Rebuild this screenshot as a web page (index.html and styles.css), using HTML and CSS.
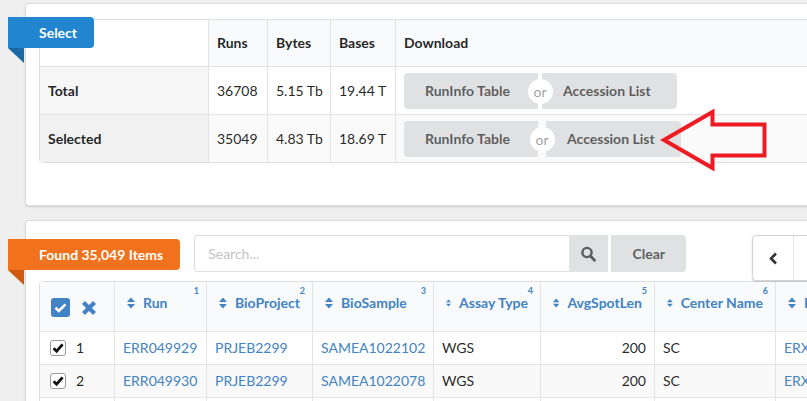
FILE: index.html
```html
<!DOCTYPE html>
<html lang="en">
<head>
<meta charset="utf-8">
<title>Run Selector</title>
<link rel="stylesheet" href="styles.css">
</head>
<body>
<div class="page">
  <section class="card card-summary">
    <div class="ribbon ribbon-blue">Select</div>
    <table class="summary">
      <thead>
        <tr>
          <th class="c-label"></th>
          <th class="c-runs">Runs</th>
          <th class="c-bytes">Bytes</th>
          <th class="c-bases">Bases</th>
          <th class="c-dl">Download</th>
        </tr>
      </thead>
      <tbody>
        <tr>
          <td class="rowhead">Total</td>
          <td>36708</td>
          <td>5.15 Tb</td>
          <td>19.44 T</td>
          <td>
            <div class="btn-group">
              <button class="btn btn-left">RunInfo Table</button>
              <span class="or"></span>
              <button class="btn btn-right">Accession List</button>
            </div>
          </td>
        </tr>
        <tr class="selected">
          <td class="rowhead">Selected</td>
          <td>35049</td>
          <td>4.83 Tb</td>
          <td>18.69 T</td>
          <td>
            <div class="btn-group">
              <button class="btn btn-left">RunInfo Table</button>
              <span class="or or-wide"></span>
              <button class="btn btn-right">Accession List</button>
            </div>
          </td>
        </tr>
      </tbody>
    </table>
  </section>

  <svg class="arrow" width="130" height="80" viewBox="0 0 130 80">
    <polygon points="14,40 62.5,12 62.5,24.5 114.5,24.5 114.5,55.5 62.5,55.5 62.5,68" fill="none" stroke="#ed1c24" stroke-width="4" stroke-linejoin="miter"/>
  </svg>

  <section class="card card-results">
    <div class="toolbar">
      <div class="ribbon ribbon-orange">Found 35,049 Items</div>
      <div class="search">
        <input class="search-input" type="text" placeholder="Search...">
        <button class="search-btn" aria-label="Search">
          <svg width="15" height="16" viewBox="0 0 15 16"><circle cx="6" cy="6.5" r="4.6" fill="none" stroke="#5c5c5c" stroke-width="2.4"/><path d="M9.4 10 L13.5 14.2" stroke="#5c5c5c" stroke-width="2.8" stroke-linecap="round"/></svg>
        </button>
      </div>
      <button class="clear-btn">Clear</button>
      <nav class="pager">
        <a class="pager-item">
          <svg width="9" height="13" viewBox="0 0 9 13"><polyline points="7,1.5 2,6.5 7,11.5" fill="none" stroke="#333" stroke-width="2.6"/></svg>
        </a>
        <a class="pager-item pager-num">1</a>
        <a class="pager-item pager-num">2</a>
      </nav>
    </div>

    <table class="results">
      <thead>
        <tr>
          <th class="w-sel">
            <div class="sel-tools">
              <svg width="19" height="19" viewBox="0 0 19 19"><rect x="0" y="0" width="19" height="19" rx="3" fill="#4183c4"/><path d="M4.5 9.8 L7.8 13 L14.5 6.3" fill="none" stroke="#fff" stroke-width="2.6"/></svg>
              <svg width="16" height="16" viewBox="0 0 16 16"><path d="M2.5 2.5 L13.5 13.5 M13.5 2.5 L2.5 13.5" stroke="#4183c4" stroke-width="4.2"/></svg>
            </div>
          </th>
          <th class="w-run"><div class="th-inner"><svg class="sort" width="8" height="12" viewBox="0 0 8 12"><path d="M0 5 L4 0.5 L8 5 Z M0 7 L4 11.5 L8 7 Z" fill="#4183c4"/></svg>Run</div><sup>1</sup></th>
          <th class="w-proj"><div class="th-inner"><svg class="sort" width="8" height="12" viewBox="0 0 8 12"><path d="M0 5 L4 0.5 L8 5 Z M0 7 L4 11.5 L8 7 Z" fill="#4183c4"/></svg>BioProject</div><sup>2</sup></th>
          <th class="w-samp"><div class="th-inner"><svg class="sort" width="8" height="12" viewBox="0 0 8 12"><path d="M0 5 L4 0.5 L8 5 Z M0 7 L4 11.5 L8 7 Z" fill="#4183c4"/></svg>BioSample</div><sup>3</sup></th>
          <th class="w-assay"><div class="th-inner"><svg class="sort" width="8" height="12" viewBox="0 0 8 12"><path d="M0 5 L4 0.5 L8 5 Z M0 7 L4 11.5 L8 7 Z" fill="#4183c4"/></svg>Assay Type</div><sup>4</sup></th>
          <th class="w-len"><div class="th-inner"><svg class="sort" width="8" height="12" viewBox="0 0 8 12"><path d="M0 5 L4 0.5 L8 5 Z M0 7 L4 11.5 L8 7 Z" fill="#4183c4"/></svg>AvgSpotLen</div><sup>5</sup></th>
          <th class="w-center"><div class="th-inner"><svg class="sort" width="8" height="12" viewBox="0 0 8 12"><path d="M0 5 L4 0.5 L8 5 Z M0 7 L4 11.5 L8 7 Z" fill="#4183c4"/></svg>Center Name</div><sup>6</sup></th>
          <th class="w-exp"><div class="th-inner"><svg class="sort" width="8" height="12" viewBox="0 0 8 12"><path d="M0 5 L4 0.5 L8 5 Z M0 7 L4 11.5 L8 7 Z" fill="#4183c4"/></svg>Experiment</div><sup>7</sup></th>
          <th><div class="th-inner"><svg class="sort" width="8" height="12" viewBox="0 0 8 12"><path d="M0 5 L4 0.5 L8 5 Z M0 7 L4 11.5 L8 7 Z" fill="#4183c4"/></svg>Instrument</div><sup>8</sup></th>
        </tr>
      </thead>
      <tbody>
        <tr>
          <td><div class="sel-cell"><svg class="cb" width="16" height="16" viewBox="0 0 16 16"><rect x="0.5" y="0.5" width="15" height="15" rx="2.5" fill="#fff" stroke="#9b9b9b"/><path d="M3.6 8.2 L6.6 11.2 L12.6 4.4" fill="none" stroke="#111" stroke-width="2.8"/></svg>1</div></td>
          <td><a class="link">ERR049929</a></td>
          <td><a class="link">PRJEB2299</a></td>
          <td><a class="link">SAMEA1022102</a></td>
          <td>WGS</td>
          <td class="num">200</td>
          <td>SC</td>
          <td><a class="link">ERX024573</a></td>
          <td>Illumina HiSeq 2000</td>
        </tr>
        <tr class="striped">
          <td><div class="sel-cell"><svg class="cb" width="16" height="16" viewBox="0 0 16 16"><rect x="0.5" y="0.5" width="15" height="15" rx="2.5" fill="#fff" stroke="#9b9b9b"/><path d="M3.6 8.2 L6.6 11.2 L12.6 4.4" fill="none" stroke="#111" stroke-width="2.8"/></svg>2</div></td>
          <td><a class="link">ERR049930</a></td>
          <td><a class="link">PRJEB2299</a></td>
          <td><a class="link">SAMEA1022078</a></td>
          <td>WGS</td>
          <td class="num">200</td>
          <td>SC</td>
          <td><a class="link">ERX024574</a></td>
          <td>Illumina HiSeq 2000</td>
        </tr>
        <tr>
          <td><div class="sel-cell"><svg class="cb" width="16" height="16" viewBox="0 0 16 16"><rect x="0.5" y="0.5" width="15" height="15" rx="2.5" fill="#fff" stroke="#9b9b9b"/><path d="M3.6 8.2 L6.6 11.2 L12.6 4.4" fill="none" stroke="#111" stroke-width="2.8"/></svg>3</div></td>
          <td><a class="link">ERR049931</a></td>
          <td><a class="link">PRJEB2299</a></td>
          <td><a class="link">SAMEA1022090</a></td>
          <td>WGS</td>
          <td class="num">200</td>
          <td>SC</td>
          <td><a class="link">ERX024575</a></td>
          <td>Illumina HiSeq 2000</td>
        </tr>
      </tbody>
    </table>
  </section>
</div>
</body>
</html>
```

FILE: styles.css
```css
* {
  box-sizing: border-box;
}

html,
body {
  margin: 0;
  overflow: hidden;
}

body {
  background: #efefef;
  font-family: Lato, "Open Sans", "Liberation Sans", sans-serif;
  font-size: 14px;
  line-height: 20px;
  color: rgba(0, 0, 0, 0.87);
}

.page {
  position: relative;
  width: 1100px;
  padding: 3px 0 0 25px;
}

/* Cards */
.card {
  position: relative;
  width: 1060px;
  background: #fff;
  border: 1px solid #dcdcdd;
  border-radius: 4px;
  box-shadow: 0 1px 2px 0 rgba(34, 36, 38, 0.15);
}

.card-summary {
  padding: 15px 13px 42px;
}

.card-results {
  margin-top: 14px;
  padding: 14px 13px 0;
}

/* Ribbon labels */
.ribbon {
  position: relative;
  color: #fff;
  font-weight: 700;
  font-size: 14px;
  line-height: 15px;
  padding: 8px 17px 8px 31px;
  border-radius: 0 4px 4px 0;
  white-space: nowrap;
}

.ribbon::after {
  content: "";
  position: absolute;
  left: 0;
  top: 100%;
  width: 0;
  height: 0;
  border-style: solid;
  border-width: 0 16px 15px 0;
  border-color: transparent;
}

.ribbon-blue {
  position: absolute;
  left: -18px;
  top: 13px;
  background: #2185d0;
  z-index: 2;
}

.ribbon-blue::after {
  border-right-color: #1a69a4;
}

.ribbon-orange {
  background: #f2711c;
  margin: 4px 0 0 -31px;
}

.ribbon-orange::after {
  border-right-color: #cf590c;
}

/* Summary table */
.summary {
  width: 100%;
  table-layout: fixed;
  border-collapse: separate;
  border-spacing: 0;
  border: 1px solid #dededf;
  border-radius: 4px;
}

.summary th,
.summary td {
  text-align: left;
  border-left: 1px solid #e3e3e4;
  vertical-align: middle;
  white-space: nowrap;
}

.summary th:first-child,
.summary td:first-child {
  border-left: 0;
}

.summary th {
  padding: 13px 8px;
  font-weight: 700;
  background: #f9fafb;
}

.summary th.c-label {
  background: transparent;
}

.summary td {
  padding: 6px 8px 5px;
  border-top: 1px solid #e3e3e4;
}

.c-label { width: 168px; }
.c-runs { width: 59px; }
.c-bytes { width: 63px; }
.c-bases { width: 65px; }

.summary td.rowhead {
  font-weight: 700;
  background: #f6f6f6;
}

.summary tr.selected td {
  background: #fafafa;
}

.summary tr.selected td.rowhead {
  background: #f1f1f1;
}

.btn-group {
  display: flex;
  height: 36px;
}

.btn {
  font: inherit;
  font-weight: 700;
  color: rgba(0, 0, 0, 0.6);
  background: #e0e1e2;
  border: 0;
  height: 36px;
  padding: 0 0 0 21px;
  text-align: left;
  white-space: nowrap;
}

.btn-left {
  width: 134px;
  border-radius: 4px 0 0 4px;
}

.btn-right {
  width: 135px;
  border-radius: 0 4px 4px 0;
}

.or {
  position: relative;
  width: 4px;
}

.or-wide {
  width: 8px;
}

.or::before {
  content: "or";
  position: absolute;
  left: 50%;
  top: 50%;
  width: 25px;
  height: 25px;
  margin: -12.5px 0 0 -12.5px;
  border-radius: 50%;
  background: #fff;
  color: rgba(0, 0, 0, 0.4);
  font-weight: 400;
  line-height: 25px;
  text-align: center;
  z-index: 1;
}

/* Arrow callout */
.arrow {
  position: absolute;
  left: 650px;
  top: 100px;
}

/* Results toolbar */
.toolbar {
  display: flex;
  align-items: flex-start;
  height: 46px;
}

.search {
  display: flex;
  margin-left: 14px;
  height: 37px;
}

.search-input {
  width: 375px;
  height: 37px;
  font: inherit;
  color: rgba(0, 0, 0, 0.87);
  border: 1px solid #dededf;
  border-right: 0;
  border-radius: 4px 0 0 4px;
  padding: 0 13px;
  outline: none;
}

.search-input::placeholder {
  color: #c4c4c4;
}

.search-btn {
  width: 39px;
  height: 37px;
  border: 0;
  background: #e0e1e2;
  display: flex;
  align-items: center;
  justify-content: center;
  padding: 0;
}

.clear-btn {
  margin-left: 3px;
  width: 75px;
  height: 37px;
  border: 0;
  border-radius: 0 4px 4px 0;
  background: #e0e1e2;
  font: inherit;
  font-weight: 700;
  color: rgba(0, 0, 0, 0.6);
  padding: 0;
}

.pager {
  display: flex;
  margin-left: 66px;
  height: 46px;
  background: #fff;
  border: 1px solid #d4d4d5;
  border-radius: 4px;
  box-shadow: 0 1px 2px 0 rgba(34, 36, 38, 0.15);
}

.pager-item {
  display: flex;
  align-items: center;
  justify-content: center;
  width: 41px;
  border-left: 1px solid #e6e6e6;
  color: rgba(0, 0, 0, 0.87);
}

.pager-item:first-child {
  width: 40px;
  border-left: 0;
}

.pager-num {
  width: 46px;
}

/* Results table */
.results {
  width: 100%;
  table-layout: fixed;
  border-collapse: separate;
  border-spacing: 0;
  border: 1px solid #dededf;
  border-radius: 4px 4px 0 0;
}

.results th,
.results td {
  text-align: left;
  border-left: 1px solid #e3e3e4;
  white-space: nowrap;
  overflow: hidden;
}

.results th:first-child,
.results td:first-child {
  border-left: 0;
}

.results th {
  position: relative;
  background: #f9fafb;
  padding: 11px 12px 18px;
  vertical-align: top;
  font-weight: 700;
  color: #4183c4;
}

.results th.w-sel {
  vertical-align: middle;
  padding: 0 8px;
}

.w-sel { width: 74px; }
.w-run { width: 92px; }
.w-proj { width: 106px; }
.w-samp { width: 121px; }
.w-assay { width: 107px; }
.w-len { width: 114px; }
.w-center { width: 121px; }
.w-exp { width: 130px; }

.sel-tools {
  display: flex;
  align-items: center;
  gap: 11px;
  margin: 2px 0 0 3px;
}

.th-inner {
  display: flex;
  align-items: center;
  gap: 8px;
}

.results sup {
  position: absolute;
  top: 4px;
  right: 7px;
  font-size: 9px;
  line-height: 10px;
  font-weight: 700;
  color: #4183c4;
}

.results td {
  padding: 6px 8px;
  border-top: 1px solid #e3e3e4;
  vertical-align: middle;
}

.results tr.striped td {
  background: #f9f9f9;
}

.results td.num {
  text-align: right;
}

.sel-cell {
  display: flex;
  align-items: center;
  gap: 10px;
  padding-left: 2px;
}

.link {
  color: #4183c4;
  text-decoration: none;
}
```
